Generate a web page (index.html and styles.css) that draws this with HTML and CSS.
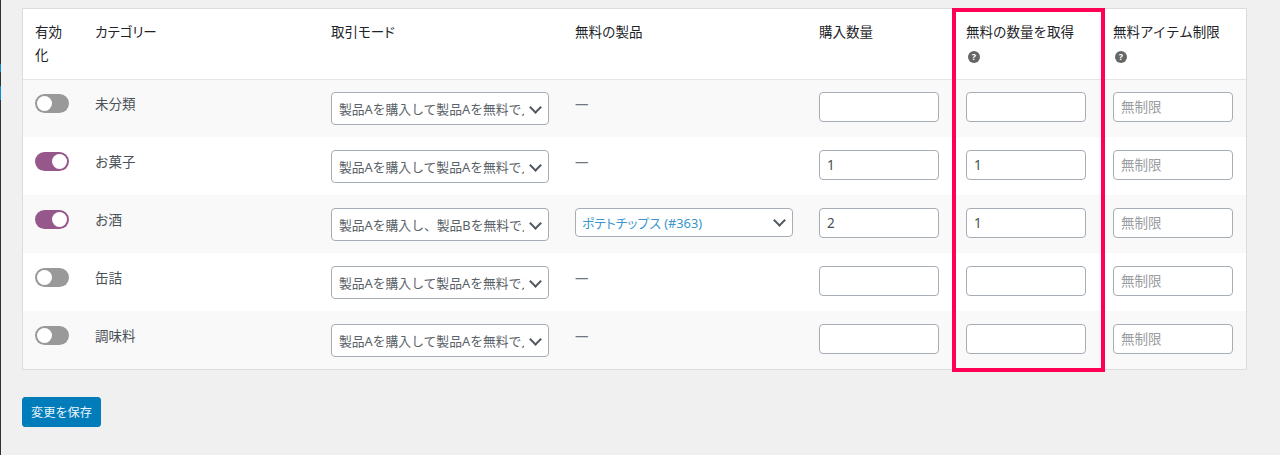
FILE: index.html
```html
<!DOCTYPE html>
<html lang="ja">
<head>
    <meta charset="UTF-8">
    <meta name="viewport" content="width=device-width, initial-scale=1.0">
    <title>BOGO設定</title>
    <link rel="stylesheet" href="styles.css">
</head>
<body>

    <div class="admin-edge">
        <span class="edge-mark"></span>
        <span class="edge-mark second"></span>
    </div>

    <form class="content">
        <div class="table-wrap">
            <table class="bogo-table">
                <colgroup>
                    <col class="col-enabled">
                    <col class="col-category">
                    <col class="col-mode">
                    <col class="col-product">
                    <col class="col-qty">
                    <col class="col-free">
                    <col class="col-limit">
                </colgroup>
                <thead>
                    <tr>
                        <th>有効化</th>
                        <th class="kana">カテゴリー</th>
                        <th class="kana">取引モード</th>
                        <th>無料の製品</th>
                        <th>購入数量</th>
                        <th>無料の数量を取得 <span class="help">?</span></th>
                        <th>無料アイテム制限 <span class="help">?</span></th>
                    </tr>
                </thead>
                <tbody>
                    <tr>
                        <td><span class="toggle"></span></td>
                        <td class="name">未分類</td>
                        <td><div class="select-wrap"><select><option>製品Aを購入して製品Aを無料で入手</option></select></div></td>
                        <td class="dash">—</td>
                        <td><input type="text"></td>
                        <td><input type="text"></td>
                        <td><input type="text" placeholder="無制限"></td>
                    </tr>
                    <tr>
                        <td><span class="toggle on"></span></td>
                        <td class="name">お菓子</td>
                        <td><div class="select-wrap"><select><option>製品Aを購入して製品Aを無料で入手</option></select></div></td>
                        <td class="dash">—</td>
                        <td><input type="text" value="1"></td>
                        <td><input type="text" value="1"></td>
                        <td><input type="text" placeholder="無制限"></td>
                    </tr>
                    <tr>
                        <td><span class="toggle on"></span></td>
                        <td class="name">お酒</td>
                        <td><div class="select-wrap"><select><option>製品Aを購入し、製品Bを無料で入手</option></select></div></td>
                        <td><div class="select-wrap product"><select class="kana"><option>ポテトチップス (#363)</option></select></div></td>
                        <td><input type="text" value="2"></td>
                        <td><input type="text" value="1"></td>
                        <td><input type="text" placeholder="無制限"></td>
                    </tr>
                    <tr>
                        <td><span class="toggle"></span></td>
                        <td class="name">缶詰</td>
                        <td><div class="select-wrap"><select><option>製品Aを購入して製品Aを無料で入手</option></select></div></td>
                        <td class="dash">—</td>
                        <td><input type="text"></td>
                        <td><input type="text"></td>
                        <td><input type="text" placeholder="無制限"></td>
                    </tr>
                    <tr>
                        <td><span class="toggle"></span></td>
                        <td class="name">調味料</td>
                        <td><div class="select-wrap"><select><option>製品Aを購入して製品Aを無料で入手</option></select></div></td>
                        <td class="dash">—</td>
                        <td><input type="text"></td>
                        <td><input type="text"></td>
                        <td><input type="text" placeholder="無制限"></td>
                    </tr>
                </tbody>
            </table>
            <div class="highlight"></div>
        </div>

        <button type="button" class="save">変更を保存</button>
    </form>

</body>
</html>
```

FILE: styles.css
```css
* {
    box-sizing: border-box;
}

body {
    margin: 0;
    height: 455px;
    overflow: hidden;
    background-color: #f0f0f0;
    font-family: "Noto Sans", "Noto Sans CJK JP", sans-serif;
    font-size: 13.5px;
    color: #4a5157;
    display: flex;
}

.admin-edge {
    width: 1px;
    background-color: #2c3338;
    flex-shrink: 0;
    padding-top: 64px;
}

.edge-mark {
    display: block;
    height: 8px;
    background-color: #0a8ad0;
}

.edge-mark.second {
    height: 14px;
    margin-top: 14px;
}

.content {
    padding: 8px 0 0 21px;
}

.table-wrap {
    position: relative;
    width: 1225px;
}

.bogo-table {
    width: 1225px;
    table-layout: fixed;
    border-collapse: separate;
    border-spacing: 0;
    background-color: #fff;
    border: 1px solid #dcdcde;
}

.col-enabled { width: 60px; }
.col-category { width: 236px; }
.col-mode { width: 244px; }
.col-product { width: 244px; }
.col-qty { width: 147px; }
.col-free { width: 147px; }
.col-limit { width: 145px; }

.kana {
    font-feature-settings: "palt";
}

th {
    height: 71px;
    padding: 12px 14px 0 12px;
    vertical-align: top;
    text-align: left;
    font-weight: 400;
    line-height: 23px;
    color: #1d2327;
    border-bottom: 1px solid #e5e5e5;
}

td {
    height: 58px;
    padding: 13px 14px 0 12px;
    vertical-align: top;
}

tbody tr:first-child td {
    height: 57px;
    padding-top: 12px;
}

td:last-child {
    padding-right: 13px;
}

tbody tr:nth-child(odd) {
    background-color: #f9f9f9;
}

.name,
.dash {
    line-height: 24px;
}

.dash {
    color: #72777c;
}

.help {
    display: inline-flex;
    align-items: center;
    justify-content: center;
    width: 12px;
    height: 12px;
    margin-left: 2px;
    border-radius: 50%;
    background-color: #666;
    color: #fff;
    font-size: 9px;
    font-weight: 700;
    line-height: 1;
}

.toggle {
    display: block;
    width: 34px;
    height: 19px;
    margin-top: 2px;
    padding: 2px;
    border-radius: 10px;
    background-color: #999;
}

.toggle::after {
    content: "";
    display: block;
    width: 15px;
    height: 15px;
    border-radius: 50%;
    background-color: #fff;
}

.toggle.on {
    background-color: #96588a;
    display: flex;
    justify-content: flex-end;
}

.select-wrap {
    position: relative;
}

.select-wrap::after {
    content: "";
    position: absolute;
    top: 11px;
    right: 9px;
    width: 7px;
    height: 7px;
    border-right: 2px solid #50575e;
    border-bottom: 2px solid #50575e;
    transform: rotate(45deg);
    pointer-events: none;
}

.select-wrap.product::after {
    top: 8px;
}

select {
    display: block;
    width: 100%;
    height: 33px;
    padding: 0 24px 0 7px;
    appearance: none;
    background-color: #fff;
    border: 1px solid #a7adb5;
    border-radius: 4px;
    font: inherit;
    font-size: 12.8px;
    color: #5a6167;
}

.product select {
    height: 29px;
    padding-left: 6px;
    color: #3a96cb;
}

input {
    display: block;
    width: 120px;
    height: 30px;
    padding: 0 7px;
    background-color: #fff;
    border: 1px solid #a7adb5;
    border-radius: 4px;
    font: inherit;
    color: #4a5157;
}

input::placeholder {
    color: #9a9da1;
}

.highlight {
    position: absolute;
    left: 930px;
    top: 0;
    width: 153px;
    height: 364px;
    border: 4px solid #ff0055;
    pointer-events: none;
}

.save {
    display: block;
    width: 79px;
    height: 30px;
    margin-top: 27px;
    padding: 0;
    background-color: #007cba;
    border: 1px solid #007cba;
    border-radius: 3px;
    font: inherit;
    font-size: 12.2px;
    color: #eaf4fa;
}
```
